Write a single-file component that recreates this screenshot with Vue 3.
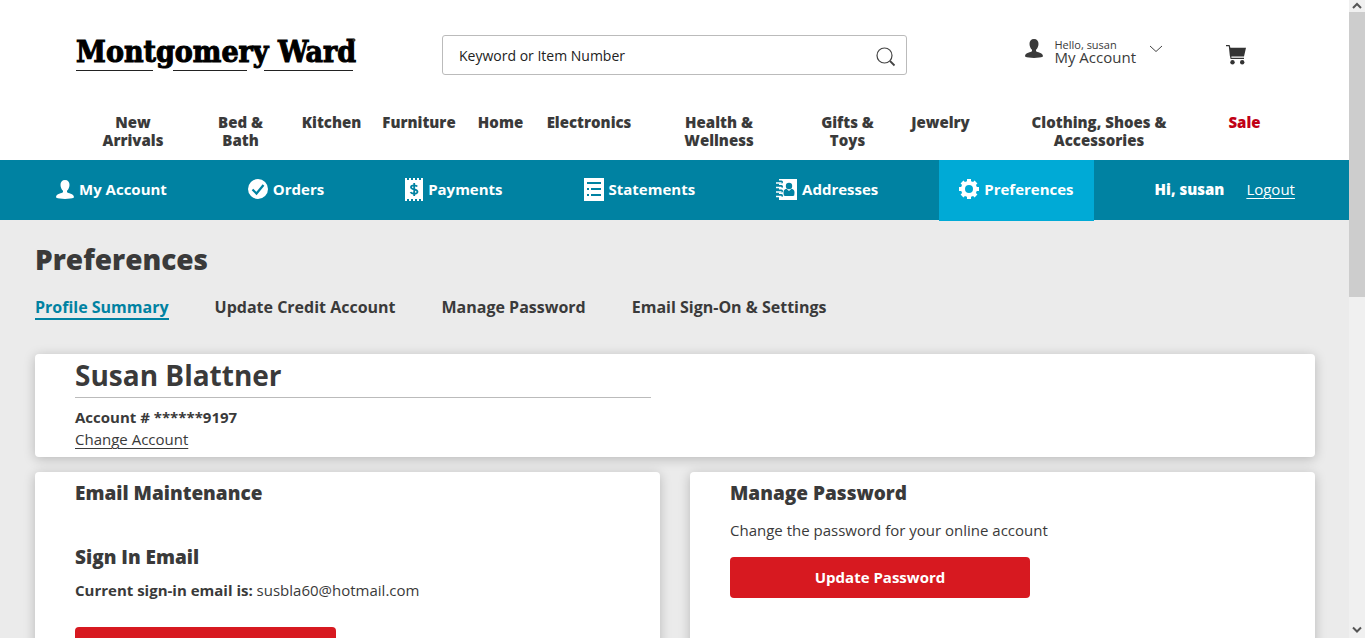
<script setup>
import { ref } from 'vue'

const keyword = ref('')

const departments = [
  { label: 'New Arrivals' },
  { label: 'Bed & Bath' },
  { label: 'Kitchen' },
  { label: 'Furniture', wide: true },
  { label: 'Home' },
  { label: 'Electronics', wide: true },
  { label: 'Health & Wellness' },
  { label: 'Gifts & Toys' },
  { label: 'Jewelry' },
  { label: 'Clothing, Shoes & Accessories' },
  { label: 'Sale', sale: true },
]

const tabs = ['Profile Summary', 'Update Credit Account', 'Manage Password', 'Email Sign-On & Settings']
</script>

<template>
  <div class="window">
    <div class="page">
      <header class="masthead">
        <div class="top-row">
          <a class="logo" href="#" aria-label="Montgomery Ward">
            <span class="logo-name">Montgomery Ward</span>
            <svg class="logo-rule" viewBox="0 0 280 46" aria-hidden="true">
              <path d="M0 38.500H77M97 38.500H171M188 38.500H277" stroke="#222" fill="none" />
              <circle cx="278" cy="8" r="1.500" fill="#333" />
            </svg>
          </a>
          <form class="search" @submit.prevent>
            <input v-model="keyword" type="search" aria-label="Search" placeholder="Keyword or Item Number" />
            <button type="submit" aria-label="Submit search">
              <svg width="20" height="20" viewBox="0 0 20 20" fill="none" stroke="#444">
                <circle cx="8.500" cy="8.500" r="7.500" stroke-width="1.200" />
                <path d="M14 14l4.500 4.500" stroke-width="1.800" />
              </svg>
            </button>
          </form>
          <button class="account" type="button">
            <svg width="18" height="19" viewBox="0 0 18 19" fill="#3a3a3a">
              <path d="M9 0C6 0 4.400 2 4.500 5c.1 2.400 1 4.600 2.500 5.700V12.300C6.300 13.400 0 13.200 0 17.600 2 18.700 5.500 19 9 19s7-.3 9-1.400c0-4.400-6.300-4.200-7-5.300V10.700C12.500 9.600 13.400 7.400 13.500 5 13.600 2 12 0 9 0z" />
            </svg>
            <span class="account-text"><small>Hello, susan</small><span>My Account</span></span>
            <svg class="chevron" width="14" height="8" viewBox="0 0 14 8" fill="none" stroke="#444">
              <path d="M1 1l6 5.500L13 1" />
            </svg>
          </button>
          <a class="cart" href="#" aria-label="Cart">
            <svg width="20" height="20" viewBox="0 0 20 20" fill="#333">
              <path d="M0 0h3.600l.8 2.700H20L18 11.500H5.400V12.800H18V14H4.600L3.800 10.500 2.800 1.300H0z" />
              <circle cx="6.500" cy="17.300" r="2.200" /><circle cx="16.200" cy="17.300" r="2.200" />
            </svg>
          </a>
        </div>
        <nav class="departments" aria-label="Departments">
          <a v-for="d in departments" :key="d.label" href="#" :class="{ sale: d.sale, wide: d.wide }">{{ d.label }}</a>
        </nav>
      </header>

      <nav class="account-bar" aria-label="Account">
        <a href="#">
          <svg width="18" height="19" viewBox="0 0 18 19" fill="#fff">
            <path d="M9 0C6 0 4.400 2 4.500 5c.1 2.400 1 4.600 2.500 5.700V12.300C6.300 13.400 0 13.200 0 17.600 2 18.700 5.500 19 9 19s7-.3 9-1.400c0-4.400-6.300-4.200-7-5.300V10.700C12.500 9.600 13.400 7.400 13.500 5 13.600 2 12 0 9 0z" />
          </svg>My Account
        </a>
        <a href="#">
          <svg width="20" height="20" viewBox="0 0 20 20">
            <circle cx="10" cy="10" r="10" fill="#fff" />
            <path d="M4.500 10.500l4 4L15.500 6" fill="none" stroke="#0082a2" stroke-width="2.200" />
          </svg>Orders
        </a>
        <a href="#">
          <svg width="18" height="23" viewBox="0 0 18 23">
            <path d="M0 0h2v2h2V0h2v2h2V0h2v2h2V0h2v2h2V0h2v23h-2v-2h-2v2h-2v-2h-2v2H8v-2H6v2H4v-2H2v2H0z" fill="#fff" />
            <path d="M12.200 8.500C11.500 7.200 6 6.500 6 9.200c0 2.800 6.500 1.500 6.500 4.600 0 2.800-6 2.300-7 .4M9.200 5v13" fill="none" stroke="#0082a2" stroke-width="1.800" />
          </svg>Payments
        </a>
        <a href="#">
          <svg width="20" height="23" viewBox="0 0 20 23">
            <path d="M0 0h20v23H0z" fill="#fff" />
            <path d="M3 5h14M3 11h2M7 11h10M3 17h2M7 17h10" stroke="#0082a2" stroke-width="2" />
          </svg>Statements
        </a>
        <a href="#">
          <svg width="21" height="21" viewBox="0 0 21 21">
            <path d="M3 0h18v21H3z" fill="#fff" />
            <path d="M3 3h2.500M3 7.500h2.500M3 12h2.500M3 16.500h2.500" stroke="#0082a2" stroke-width="3" stroke-linecap="round" />
            <path d="M0 4h5M0 8.500h5M0 13h5M0 17.500h5" stroke="#fff" stroke-width="1.500" stroke-linecap="round" />
            <circle cx="13" cy="7" r="3.200" fill="#0082a2" />
            <path d="M10.500 9.800c-2 .3-3 1.500-3 4l.3 2.700 1.200.5h8l1.200-.5.3-2.700c0-2.500-1-3.700-3-4L13 12z" fill="#0082a2" />
          </svg>Addresses
        </a>
        <a class="active" href="#" aria-current="page">
          <svg width="20" height="20" viewBox="0 0 20 20">
            <circle cx="10" cy="10" r="6" fill="none" stroke="#fff" stroke-width="4" />
            <path d="M10 0v4M10 16v4M0 10h4M16 10h4M3 3l2.500 2.500M14.500 14.500L17 17M17 3l-2.500 2.500M3 17l2.500-2.500" stroke="#fff" stroke-width="4" />
          </svg>Preferences
        </a>
        <div class="session"><strong>Hi, susan</strong><a href="#">Logout</a></div>
      </nav>

      <main class="content">
        <h1>Preferences</h1>
        <nav class="tabs" aria-label="Preferences">
          <a v-for="(t, i) in tabs" :key="t" href="#" :class="{ current: i === 0 }">{{ t }}</a>
        </nav>

        <section class="card summary">
          <h2>Susan Blattner</h2>
          <strong>Account # ******9197</strong>
          <a href="#">Change Account</a>
        </section>

        <div class="columns">
          <section class="card">
            <h3>Email Maintenance</h3>
            <h3 class="sign-in">Sign In Email</h3>
            <p><b>Current sign-in email is:</b> susbla60@hotmail.com</p>
            <button class="primary email-button" type="button" aria-label="Update email"></button>
          </section>
          <section class="card">
            <h3>Manage Password</h3>
            <p>Change the password for your online account</p>
            <button class="primary" type="button">Update Password</button>
          </section>
        </div>
      </main>
    </div>

    <div class="scrollbar" aria-hidden="true">
      <svg width="10" height="8" viewBox="0 0 10 8" fill="none" stroke="#555" stroke-width="2">
        <path d="M1 6l4-4 4 4" />
      </svg>
      <div class="thumb"></div>
      <svg class="down" width="10" height="8" viewBox="0 0 10 8" fill="none" stroke="#555" stroke-width="2">
        <path d="M1 1.500l4 4 4-4" />
      </svg>
    </div>
  </div>
</template>

<style>
body {
  margin: 0;
  overflow: hidden;
}
</style>

<style scoped>
.window {
  display: flex;
  height: 100vh;
  overflow: hidden;
  background: #ebebeb;
  color: #3a3a3a;
  font: 15px/22px "Open Sans", "Noto Sans", sans-serif;
}
.window * { box-sizing: border-box; }
a { color: inherit; text-decoration: none; }
button, input { font: inherit; color: inherit; }
svg { flex: none; display: block; }
.page { flex: 1; min-width: 0; }
.masthead { height: 160px; background: #fff; }
.top-row {
  display: flex;
  align-items: flex-start;
  height: 113px;
  padding: 32px 103px 0 76px;
}
.logo { position: relative; width: 280px; height: 46px; color: #000; }
.logo-name {
  display: block;
  white-space: nowrap;
  font: bold 30px/40px "DejaVu Serif Condensed", "DejaVu Serif", serif;
  -webkit-text-stroke: 1px #000;
}
.logo-rule { position: absolute; inset: 0; width: 280px; height: 46px; }
.search {
  display: flex;
  align-items: center;
  width: 465px;
  height: 40px;
  margin: 3px 0 0 86px;
  border: 1px solid #bbb;
  border-radius: 3px;
}
.search input {
  flex: 1;
  min-width: 0;
  height: 38px;
  padding: 0 16px;
  border: 0;
  outline: 0;
  background: none;
  font-size: 14px;
}
.search input::placeholder { color: #222; opacity: 1; }
.search button { padding: 4px 10px 0 0; border: 0; background: none; }
.account {
  display: flex;
  align-items: flex-start;
  margin: 7px 0 0 auto;
  padding: 0;
  border: 0;
  background: none;
  text-align: left;
}
.account-text { display: flex; flex-direction: column; margin-left: 11px; line-height: 12px; }
.account-text small { font-size: 11px; }
.chevron { margin: 6px 0 0 13px; }
.cart { margin: 13px 0 0 63px; }
.departments {
  display: grid;
  grid-template-columns: 114fr 101fr 81fr 94fr 69fr 108fr 152fr 105fr 81fr 236fr 55fr;
  padding: 0 77px 0 76px;
  text-align: center;
  font-weight: 800;
  line-height: 18px;
}
.departments a { padding: 0 10px; }
.departments a.wide { padding: 0 8px; }
.departments a:nth-child(1), .departments a:nth-child(2) { padding: 0 16px; }
.departments a:nth-child(10) { padding: 0 45px; }
.departments .sale { color: #c10016; }
.account-bar {
  display: flex;
  justify-content: space-between;
  height: 60px;
  padding: 0 54px 0 36px;
  background: #0082a2;
  color: #fff;
  font-weight: 700;
}
.account-bar > a {
  display: flex;
  align-items: center;
  gap: 5px;
  height: 61px;
  padding: 0 20px 3px;
}
.account-bar .active { background: #00aad6; }
.session { display: flex; align-items: center; gap: 22px; padding: 0 0 2px 20px; }
.session a { font-weight: 400; text-decoration: underline; text-underline-offset: 3px; }
.content { padding: 19px 34px 0 35px; }
h1, h2, h3, p { margin: 0; }
h1 { font-size: 28px; line-height: 40px; font-weight: 800; }
.tabs {
  display: flex;
  gap: 46px;
  margin-top: 17px;
  font-size: 16px;
  font-weight: 700;
}
.tabs a { height: 24px; }
.tabs .current { color: #0082a2; border-bottom: 2px solid #0082a2; }
.card {
  padding: 9px 40px;
  border-radius: 4px;
  background: #fff;
  box-shadow: 0 2px 12px rgba(0, 0, 0, 0.22);
}
.summary {
  display: flex;
  flex-direction: column;
  align-items: flex-start;
  height: 103px;
  margin-top: 34px;
  padding: 0 40px;
}
.summary h2 {
  width: 48%;
  flex: none;
  height: 44px;
  margin-bottom: 8px;
  border-bottom: 1px solid #bbb;
  font-size: 28px;
  line-height: 42px;
}
.summary a { text-decoration: underline; text-underline-offset: 3px; }
.columns { display: grid; grid-template-columns: 1fr 1fr; gap: 30px; margin-top: 15px; }
.columns .card { height: 320px; }
h3 { font-size: 19px; line-height: 24px; font-weight: 800; }
.sign-in { margin-top: 40px; }
.columns p { margin-top: 14px; }
.columns .sign-in + p { margin-top: 10px; }
.primary {
  display: block;
  width: 300px;
  height: 41px;
  margin-top: 16px;
  padding: 0 0 2px;
  border: 0;
  border-radius: 4px;
  background: #d71920;
  color: #fff;
  font-weight: 700;
}
.email-button { width: 261px; margin-top: 26px; }
.scrollbar {
  display: flex;
  flex-direction: column;
  align-items: center;
  width: 16px;
  padding: 2px 0 4px;
  background: #f0f0f0;
}
.thumb { width: 16px; height: 285px; margin-top: 2px; background: #cdcdcd; }
.down { margin-top: auto; }
</style>
